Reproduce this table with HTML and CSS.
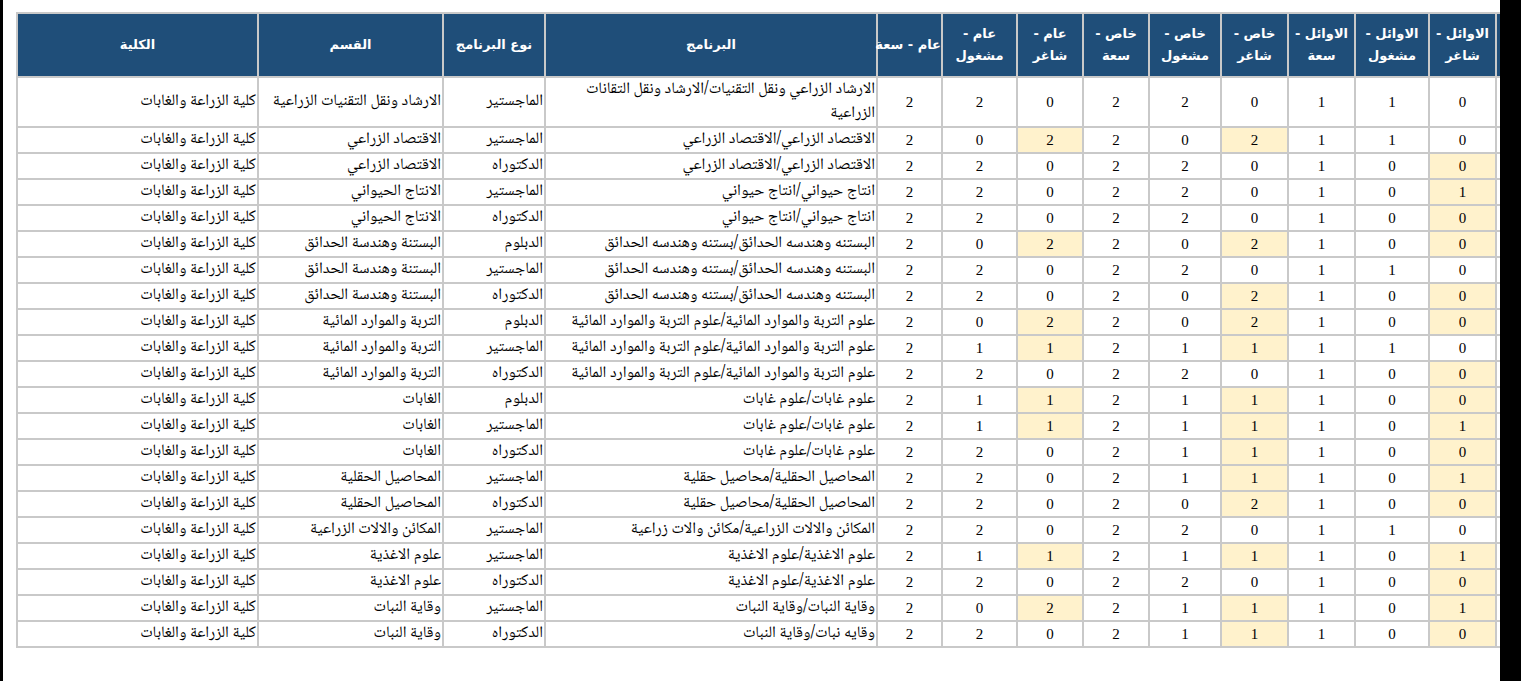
FILE: index.html
```html
<!DOCTYPE html>
<html lang="ar">
<head>
<meta charset="utf-8">
<title>المقاعد الدراسية</title>
<link rel="stylesheet" href="styles.css">
</head>
<body>
<div class="frame">
  <div class="panel">
    <table class="grid">
      <colgroup>
        <col class="c-extra"><col class="c67"><col class="c74"><col class="c67"><col class="c67"><col class="c72"><col class="c66"><col class="c66"><col class="c75"><col class="c65"><col class="c-prog"><col class="c-type"><col class="c-dept"><col class="c-col">
      </colgroup>
      <thead>
        <tr>
          <th></th>
          <th>الاوائل - شاغر</th>
          <th>الاوائل - مشغول</th>
          <th>الاوائل - سعة</th>
          <th>خاص - شاغر</th>
          <th>خاص - مشغول</th>
          <th>خاص - سعة</th>
          <th>عام - شاغر</th>
          <th>عام - مشغول</th>
          <th class="nowrap">عام - سعة</th>
          <th>البرنامج</th>
          <th>نوع البرنامج</th>
          <th>القسم</th>
          <th>الكلية</th>
        </tr>
      </thead>
      <tbody>
        <tr><td></td><td>0</td><td>1</td><td>1</td><td>0</td><td>2</td><td>2</td><td>0</td><td>2</td><td>2</td><td class="t">الارشاد الزراعي ونقل التقنيات/الارشاد ونقل التقانات الزراعية</td><td class="t">الماجستير</td><td class="t">الارشاد ونقل التقنيات الزراعية</td><td class="t">كلية الزراعة والغابات</td></tr>
        <tr><td></td><td>0</td><td>1</td><td>1</td><td class="hl">2</td><td>0</td><td>2</td><td class="hl">2</td><td>0</td><td>2</td><td class="t">الاقتصاد الزراعي/الاقتصاد الزراعي</td><td class="t">الماجستير</td><td class="t">الاقتصاد الزراعي</td><td class="t">كلية الزراعة والغابات</td></tr>
        <tr><td></td><td class="hl">0</td><td>0</td><td>1</td><td>0</td><td>2</td><td>2</td><td>0</td><td>2</td><td>2</td><td class="t">الاقتصاد الزراعي/الاقتصاد الزراعي</td><td class="t">الدكتوراه</td><td class="t">الاقتصاد الزراعي</td><td class="t">كلية الزراعة والغابات</td></tr>
        <tr><td></td><td class="hl">1</td><td>0</td><td>1</td><td>0</td><td>2</td><td>2</td><td>0</td><td>2</td><td>2</td><td class="t">انتاج حيواني/انتاج حيواني</td><td class="t">الماجستير</td><td class="t">الانتاج الحيواني</td><td class="t">كلية الزراعة والغابات</td></tr>
        <tr><td></td><td class="hl">0</td><td>0</td><td>1</td><td>0</td><td>2</td><td>2</td><td>0</td><td>2</td><td>2</td><td class="t">انتاج حيواني/انتاج حيواني</td><td class="t">الدكتوراه</td><td class="t">الانتاج الحيواني</td><td class="t">كلية الزراعة والغابات</td></tr>
        <tr><td></td><td class="hl">0</td><td>0</td><td>1</td><td class="hl">2</td><td>0</td><td>2</td><td class="hl">2</td><td>0</td><td>2</td><td class="t">البستنه وهندسه الحدائق/بستنه وهندسه الحدائق</td><td class="t">الدبلوم</td><td class="t">البستنة وهندسة الحدائق</td><td class="t">كلية الزراعة والغابات</td></tr>
        <tr><td></td><td>0</td><td>1</td><td>1</td><td>0</td><td>2</td><td>2</td><td>0</td><td>2</td><td>2</td><td class="t">البستنه وهندسه الحدائق/بستنه وهندسه الحدائق</td><td class="t">الماجستير</td><td class="t">البستنة وهندسة الحدائق</td><td class="t">كلية الزراعة والغابات</td></tr>
        <tr><td></td><td class="hl">0</td><td>0</td><td>1</td><td class="hl">2</td><td>0</td><td>2</td><td>0</td><td>2</td><td>2</td><td class="t">البستنه وهندسه الحدائق/بستنه وهندسه الحدائق</td><td class="t">الدكتوراه</td><td class="t">البستنة وهندسة الحدائق</td><td class="t">كلية الزراعة والغابات</td></tr>
        <tr><td></td><td class="hl">0</td><td>0</td><td>1</td><td class="hl">2</td><td>0</td><td>2</td><td class="hl">2</td><td>0</td><td>2</td><td class="t">علوم التربة والموارد المائية/علوم التربة والموارد المائية</td><td class="t">الدبلوم</td><td class="t">التربة والموارد المائية</td><td class="t">كلية الزراعة والغابات</td></tr>
        <tr><td></td><td>0</td><td>1</td><td>1</td><td class="hl">1</td><td>1</td><td>2</td><td class="hl">1</td><td>1</td><td>2</td><td class="t">علوم التربة والموارد المائية/علوم التربة والموارد المائية</td><td class="t">الماجستير</td><td class="t">التربة والموارد المائية</td><td class="t">كلية الزراعة والغابات</td></tr>
        <tr><td></td><td class="hl">0</td><td>0</td><td>1</td><td>0</td><td>2</td><td>2</td><td>0</td><td>2</td><td>2</td><td class="t">علوم التربة والموارد المائية/علوم التربة والموارد المائية</td><td class="t">الدكتوراه</td><td class="t">التربة والموارد المائية</td><td class="t">كلية الزراعة والغابات</td></tr>
        <tr><td></td><td class="hl">0</td><td>0</td><td>1</td><td class="hl">1</td><td>1</td><td>2</td><td class="hl">1</td><td>1</td><td>2</td><td class="t">علوم غابات/علوم غابات</td><td class="t">الدبلوم</td><td class="t">الغابات</td><td class="t">كلية الزراعة والغابات</td></tr>
        <tr><td></td><td class="hl">1</td><td>0</td><td>1</td><td class="hl">1</td><td>1</td><td>2</td><td class="hl">1</td><td>1</td><td>2</td><td class="t">علوم غابات/علوم غابات</td><td class="t">الماجستير</td><td class="t">الغابات</td><td class="t">كلية الزراعة والغابات</td></tr>
        <tr><td></td><td class="hl">0</td><td>0</td><td>1</td><td class="hl">1</td><td>1</td><td>2</td><td>0</td><td>2</td><td>2</td><td class="t">علوم غابات/علوم غابات</td><td class="t">الدكتوراه</td><td class="t">الغابات</td><td class="t">كلية الزراعة والغابات</td></tr>
        <tr><td></td><td class="hl">1</td><td>0</td><td>1</td><td class="hl">1</td><td>1</td><td>2</td><td>0</td><td>2</td><td>2</td><td class="t">المحاصيل الحقلية/محاصيل حقلية</td><td class="t">الماجستير</td><td class="t">المحاصيل الحقلية</td><td class="t">كلية الزراعة والغابات</td></tr>
        <tr><td></td><td class="hl">0</td><td>0</td><td>1</td><td class="hl">2</td><td>0</td><td>2</td><td>0</td><td>2</td><td>2</td><td class="t">المحاصيل الحقلية/محاصيل حقلية</td><td class="t">الدكتوراه</td><td class="t">المحاصيل الحقلية</td><td class="t">كلية الزراعة والغابات</td></tr>
        <tr><td></td><td>0</td><td>1</td><td>1</td><td>0</td><td>2</td><td>2</td><td>0</td><td>2</td><td>2</td><td class="t">المكائن والالات الزراعية/مكائن والات زراعية</td><td class="t">الماجستير</td><td class="t">المكائن والالات الزراعية</td><td class="t">كلية الزراعة والغابات</td></tr>
        <tr><td></td><td class="hl">1</td><td>0</td><td>1</td><td class="hl">1</td><td>1</td><td>2</td><td class="hl">1</td><td>1</td><td>2</td><td class="t">علوم الاغذية/علوم الاغذية</td><td class="t">الماجستير</td><td class="t">علوم الاغذية</td><td class="t">كلية الزراعة والغابات</td></tr>
        <tr><td></td><td class="hl">0</td><td>0</td><td>1</td><td>0</td><td>2</td><td>2</td><td>0</td><td>2</td><td>2</td><td class="t">علوم الاغذية/علوم الاغذية</td><td class="t">الدكتوراه</td><td class="t">علوم الاغذية</td><td class="t">كلية الزراعة والغابات</td></tr>
        <tr><td></td><td class="hl">1</td><td>0</td><td>1</td><td class="hl">1</td><td>1</td><td>2</td><td class="hl">2</td><td>0</td><td>2</td><td class="t">وقاية النبات/وقاية النبات</td><td class="t">الماجستير</td><td class="t">وقاية النبات</td><td class="t">كلية الزراعة والغابات</td></tr>
        <tr><td></td><td class="hl">0</td><td>0</td><td>1</td><td class="hl">1</td><td>1</td><td>2</td><td>0</td><td>2</td><td>2</td><td class="t">وقايه نبات/وقاية النبات</td><td class="t">الدكتوراه</td><td class="t">وقاية النبات</td><td class="t">كلية الزراعة والغابات</td></tr>
      </tbody>
    </table>
  </div>
</div>
</body>
</html>
```

FILE: styles.css
```css
html, body {
  margin: 0;
  padding: 0;
  height: 100%;
}
body {
  background: #000;
  overflow: hidden;
}
.frame {
  display: flex;
  height: 100%;
  padding-left: 3px;
}
.panel {
  width: 1497px;
  flex: none;
  height: 100%;
  background: #fff;
  overflow: hidden;
  padding: 12px 0 0 13px;
  box-sizing: border-box;
  direction: ltr;
}
.grid {
  direction: rtl;
  border-collapse: collapse;
  table-layout: fixed;
  width: 1549px;
  font-family: "Liberation Serif", serif;
  font-size: 15px;
  color: #000;
}
.c-extra { width: 70px; }
.c67 { width: 67px; }
.c74 { width: 74px; }
.c72 { width: 72px; }
.c66 { width: 66px; }
.c75 { width: 75px; }
.c65 { width: 65px; }
.c-prog { width: 332px; }
.c-type { width: 102px; }
.c-dept { width: 185px; }
.c-col { width: 241px; }

.grid th,
.grid td {
  border: 2px solid #c9c9c9;
  padding: 0 1px;
}
.grid th {
  background: #1f4e79;
  color: #fff;
  font-family: "DejaVu Sans", sans-serif;
  font-weight: bold;
  font-size: 13px;
  line-height: 22px;
  height: 62px;
  text-align: center;
  vertical-align: middle;
}
.grid th.nowrap {
  white-space: nowrap;
  padding: 0;
}
.grid td {
  line-height: 24px;
  text-align: center;
  vertical-align: middle;
}
.grid td.t {
  text-align: right;
  font-family: "Noto Naskh Arabic", "Noto Sans Arabic", "DejaVu Sans", sans-serif;
  font-size: 16px;
}
.grid td.hl {
  background: #fff2cc;
}
```
